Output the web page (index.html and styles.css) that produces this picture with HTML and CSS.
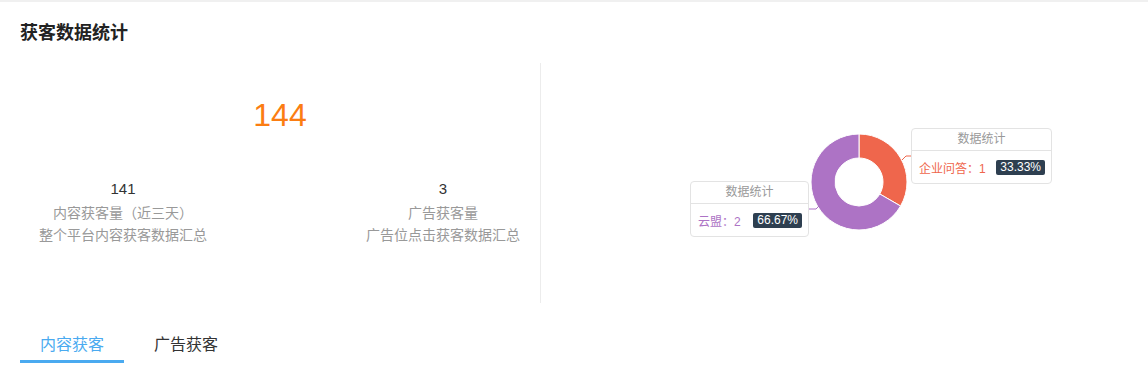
FILE: index.html
```html
<!DOCTYPE html>
<html lang="zh-CN">
<head>
  <meta charset="UTF-8">
  <meta name="viewport" content="width=device-width, initial-scale=1.0">
  <title>获客数据统计</title>
  <link rel="stylesheet" href="styles.css">
</head>
<body>
  <div class="card">
    <h2 class="card-title">获客数据统计</h2>

    <div class="stats-row">
      <div class="stats-left">
        <div class="total">144</div>
        <div class="stat-list">
          <div class="stat-item">
            <div class="stat-num">141</div>
            <div class="stat-label">内容获客量（近三天）</div>
            <div class="stat-label">整个平台内容获客数据汇总</div>
          </div>
          <div class="stat-item">
            <div class="stat-num">3</div>
            <div class="stat-label">广告获客量</div>
            <div class="stat-label">广告位点击获客数据汇总</div>
          </div>
        </div>
      </div>

      <div class="stats-right">
        <div class="chart">
          <svg class="donut" width="587" height="240" viewBox="0 0 587 240">
            <path d="M318 71 A48 48 0 0 1 359.57 143 L338.78 131 A24 24 0 0 0 318 95 Z" fill="#ef664c" stroke="#fff" stroke-width="1"/>
            <path d="M359.57 143 A48 48 0 1 1 318 71 L318 95 A24 24 0 1 0 338.78 131 Z" fill="#ad73c5" stroke="#fff" stroke-width="1"/>
            <polyline points="361,97 365,93 370,93" fill="none" stroke="#ef664c" stroke-width="1"/>
            <polyline points="268,146 275,146 278,143" fill="none" stroke="#ad73c5" stroke-width="1"/>
          </svg>

          <div class="tip tip-qa">
            <div class="tip-head">数据统计</div>
            <div class="tip-row">
              <span class="tip-name name-qa">企业问答：1</span>
              <span class="tip-pct">33.33%</span>
            </div>
          </div>

          <div class="tip tip-ym">
            <div class="tip-head">数据统计</div>
            <div class="tip-row">
              <span class="tip-name name-ym">云盟：2</span>
              <span class="tip-pct">66.67%</span>
            </div>
          </div>
        </div>
      </div>
    </div>

    <ul class="tabs">
      <li class="tab active">内容获客</li>
      <li class="tab">广告获客</li>
    </ul>
  </div>
</body>
</html>
```

FILE: styles.css
```css
body {
  margin: 0;
  padding: 0;
  background-color: #fff;
  font-family: "Liberation Sans", "Noto Sans CJK SC", sans-serif;
  color: #333;
}
.card {
  border-top: 2px solid #f0f0f0;
  padding: 0 20px;
  height: 367px;
  overflow: hidden;
}
.card-title {
  margin: 18px 0 0;
  font-size: 18px;
  line-height: 26px;
  font-weight: bold;
  color: #222;
}
.stats-row {
  display: flex;
  height: 240px;
  margin-top: 17px;
}
.stats-left {
  width: 520px;
  border-right: 1px solid #ececec;
}
.total {
  padding-top: 36px;
  font-size: 32px;
  line-height: 32px;
  text-align: center;
  color: #fb7d12;
}
.stat-list {
  display: flex;
  justify-content: space-between;
  padding: 0 20px 0 19px;
  margin-top: 48px;
}
.stat-item {
  text-align: center;
  white-space: nowrap;
}
.stat-num {
  font-size: 15px;
  line-height: 20px;
  color: #333;
}
.stat-label {
  font-size: 14px;
  line-height: 22px;
  color: #999;
}
.stat-num + .stat-label {
  margin-top: 3px;
}
.stats-right {
  flex: 1;
}
.chart {
  position: relative;
  width: 587px;
  height: 240px;
}
.donut {
  display: block;
}
.tip {
  position: absolute;
  box-sizing: border-box;
  height: 56px;
  background-color: #fff;
  border: 1px solid #e3e3e3;
  border-radius: 4px;
  font-size: 12px;
}
.tip-qa {
  left: 370px;
  top: 65px;
  width: 141px;
}
.tip-ym {
  left: 149px;
  top: 118px;
  width: 119px;
}
.tip-head {
  height: 21px;
  line-height: 21px;
  text-align: center;
  color: #999;
  border-bottom: 1px solid #e3e3e3;
}
.tip-row {
  display: flex;
  align-items: center;
  justify-content: space-between;
  height: 32px;
  padding: 0 6px 0 7px;
}
.name-qa {
  color: #ef664c;
}
.name-ym {
  color: #ad73c5;
}
.tip-pct {
  background-color: #2e3f50;
  color: #fff;
  line-height: 15px;
  padding: 0 4px;
  border-radius: 2px;
}
.tabs {
  list-style-type: none;
  display: flex;
  gap: 10px;
  margin: 27px 0 0;
  padding: 0;
}
.tab {
  padding: 0 20px;
  font-size: 16px;
  line-height: 30px;
  color: #333;
  border-bottom: 3px solid transparent;
  cursor: pointer;
}
.tab.active {
  color: #4aaaf0;
  border-bottom-color: #4aaaf0;
}
```
